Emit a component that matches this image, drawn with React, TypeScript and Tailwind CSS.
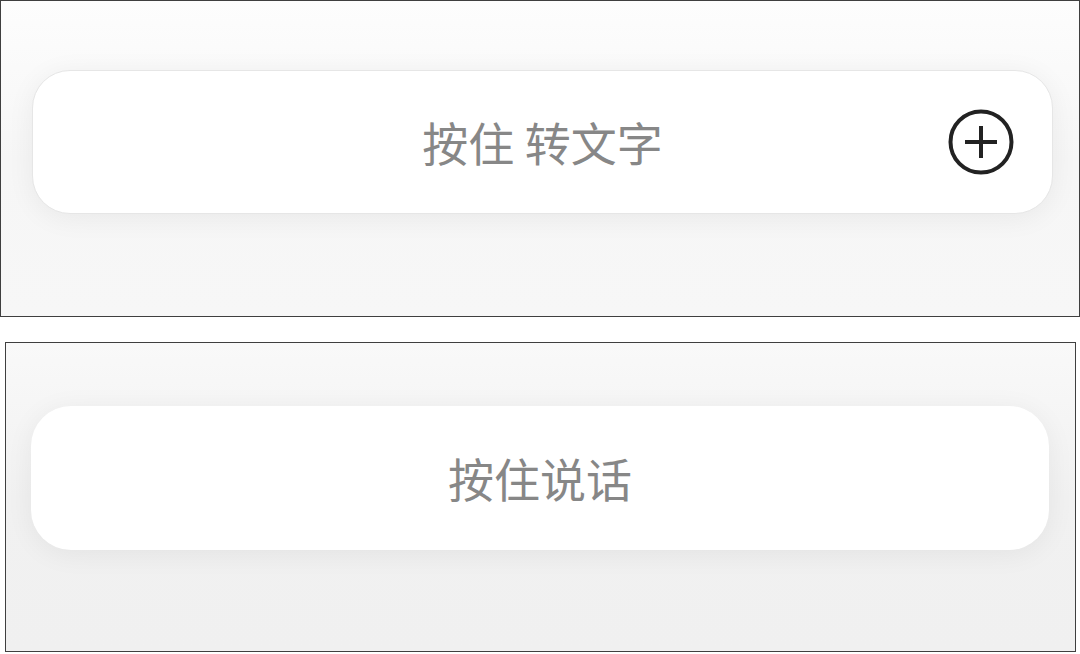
function PlusCircle() {
  return (
    <svg width="66" height="66" viewBox="0 0 66 66" fill="none">
      <circle cx="33" cy="33" r="30.5" stroke="#222" strokeWidth="4" />
      <path d="M17 33h32M33 17v32" stroke="#222" strokeWidth="4" />
    </svg>
  );
}

export default function App() {
  return (
    <div
      className="w-[1080px] h-[654px] bg-white flex flex-col"
      style={{ fontFamily: '"Noto Sans CJK SC", "Noto Sans", sans-serif' }}
    >
      {/* 按住 转文字 */}
      <div className="w-[1080px] h-[317px] border border-[#3f3f3f] bg-gradient-to-b from-[#fdfdfd] via-[#f6f6f6] to-[#f7f7f7] pt-[69px] pl-[31px]">
        <div className="relative w-[1021px] h-[144px] rounded-[38px] bg-white border border-[#e6e6e6] shadow-[0_4px_28px_rgba(0,0,0,0.06)] flex items-center justify-center">
          <span className="text-[46px] leading-none text-[#878787] -mt-[3px]">按住 转文字</span>
          <div className="absolute right-[38px] top-1/2 -translate-y-1/2">
            <PlusCircle />
          </div>
        </div>
      </div>

      {/* 按住说话 */}
      <div className="mt-[25px] ml-[5px] w-[1071px] h-[310px] border border-[#3f3f3f] bg-gradient-to-b from-[#f9f9f9] via-[#f1f1f1] to-[#f0f0f0] pt-[63px] pl-[25px]">
        <div className="w-[1018px] h-[144px] rounded-[40px] bg-white shadow-[0_4px_28px_rgba(0,0,0,0.06)] flex items-center justify-center">
          <span className="text-[46px] leading-none text-[#878787] -mt-[3px]">按住说话</span>
        </div>
      </div>
    </div>
  );
}
